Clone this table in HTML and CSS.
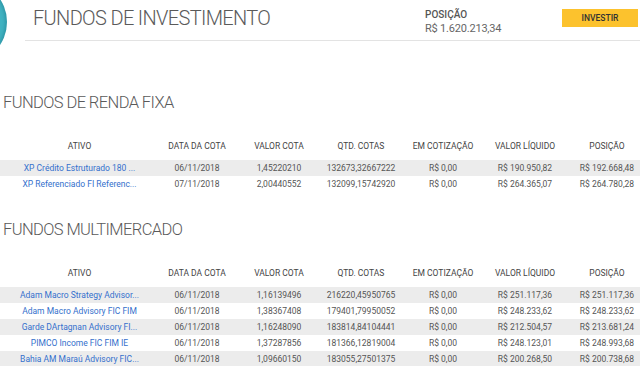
FILE: index.html
```html
<!DOCTYPE html>
<html lang="pt-BR">
<head>
<meta charset="utf-8">
<title>Fundos de Investimento</title>
<link rel="stylesheet" href="styles.css">
</head>
<body>
<div class="page">
  <header class="topbar">
    <div class="logo"></div>
    <h1 class="title">FUNDOS DE INVESTIMENTO</h1>
    <div class="position">
      <div class="position-label">POSIÇÃO</div>
      <div class="position-value">R$ 1.620.213,34</div>
    </div>
    <button class="btn-invest">INVESTIR</button>
  </header>

  <section class="section">
    <h2 class="section-title">FUNDOS DE RENDA FIXA</h2>
    <div class="table">
      <div class="row head">
        <div>ATIVO</div><div>DATA DA COTA</div><div>VALOR COTA</div><div>QTD. COTAS</div><div>EM COTIZAÇÃO</div><div>VALOR LÍQUIDO</div><div>POSIÇÃO</div>
      </div>
      <div class="row odd">
        <div><a class="fund">XP Crédito Estruturado 180 ...</a></div><div>06/11/2018</div><div>1,45220210</div><div>132673,32667222</div><div>R$ 0,00</div><div>R$ 190.950,82</div><div>R$ 192.668,48</div>
      </div>
      <div class="row">
        <div><a class="fund">XP Referenciado FI Referenc...</a></div><div>07/11/2018</div><div>2,00440552</div><div>132099,15742920</div><div>R$ 0,00</div><div>R$ 264.365,07</div><div>R$ 264.780,28</div>
      </div>
    </div>
  </section>

  <section class="section">
    <h2 class="section-title">FUNDOS MULTIMERCADO</h2>
    <div class="table">
      <div class="row head">
        <div>ATIVO</div><div>DATA DA COTA</div><div>VALOR COTA</div><div>QTD. COTAS</div><div>EM COTIZAÇÃO</div><div>VALOR LÍQUIDO</div><div>POSIÇÃO</div>
      </div>
      <div class="row odd">
        <div><a class="fund">Adam Macro Strategy Advisor...</a></div><div>06/11/2018</div><div>1,16139496</div><div>216220,45950765</div><div>R$ 0,00</div><div>R$ 251.117,36</div><div>R$ 251.117,36</div>
      </div>
      <div class="row">
        <div><a class="fund">Adam Macro Advisory FIC FIM</a></div><div>06/11/2018</div><div>1,38367408</div><div>179401,79950052</div><div>R$ 0,00</div><div>R$ 248.233,62</div><div>R$ 248.233,62</div>
      </div>
      <div class="row odd">
        <div><a class="fund">Garde DArtagnan Advisory FI...</a></div><div>06/11/2018</div><div>1,16248090</div><div>183814,84104441</div><div>R$ 0,00</div><div>R$ 212.504,57</div><div>R$ 213.681,24</div>
      </div>
      <div class="row">
        <div><a class="fund">PIMCO Income FIC FIM IE</a></div><div>06/11/2018</div><div>1,37287856</div><div>181366,12819004</div><div>R$ 0,00</div><div>R$ 248.123,01</div><div>R$ 248.993,68</div>
      </div>
      <div class="row odd">
        <div><a class="fund">Bahia AM Maraú Advisory FIC...</a></div><div>06/11/2018</div><div>1,09660150</div><div>183055,27501375</div><div>R$ 0,00</div><div>R$ 200.268,50</div><div>R$ 200.738,68</div>
      </div>
    </div>
  </section>
</div>
</body>
</html>
```
FILE: styles.css
```css
* { box-sizing: border-box; }
html, body {
  margin: 0;
  padding: 0;
  background: #ffffff;
  overflow: hidden;
}
body {
  font-family: Roboto, "Liberation Sans", Arial, sans-serif;
  color: #555555;
}
.page {
  width: 640px;
  height: 366px;
  overflow: hidden;
}
.topbar {
  position: relative;
  display: flex;
  align-items: flex-start;
  margin-left: 25px;
  height: 41px;
  border-bottom: 1px solid #e3e3e3;
  padding-left: 8px;
  padding-right: 2px;
}
.logo {
  position: absolute;
  left: -100px;
  top: -19px;
  width: 82px;
  height: 82px;
  border-radius: 50%;
  background: #3fb2c1;
  box-shadow: inset -2px 0 3px rgba(0, 80, 100, 0.25);
}
.title {
  flex: 1;
  margin: 0;
  padding-top: 8px;
  font-size: 20px;
  line-height: 20px;
  font-weight: 300;
  color: #5a5a5a;
  letter-spacing: -0.65px;
}
.position {
  width: 137px;
  padding-top: 9px;
}
.position-label {
  font-size: 10px;
  line-height: 12px;
  font-weight: 500;
  color: #555555;
}
.position-value {
  font-size: 11px;
  line-height: 14px;
  color: #666666;
  margin-top: 1px;
  letter-spacing: -0.2px;
}
.btn-invest {
  margin-top: 9px;
  width: 76px;
  height: 18px;
  border: none;
  border-radius: 0;
  background: #fcc22d;
  color: #333333;
  font-family: Roboto, "Liberation Sans", Arial, sans-serif;
  font-size: 8.5px;
  font-weight: 500;
  padding: 0;
}
.section-title {
  margin: 52px 0 0 3px;
  font-size: 16.5px;
  line-height: 20px;
  font-weight: 300;
  color: #5a5a5a;
  letter-spacing: -0.6px;
}
.section + .section .section-title {
  margin-top: 28px;
}
.table {
  margin-top: 25px;
  width: 648px;
}
.row {
  display: grid;
  grid-template-columns: 156px repeat(6, 82px);
  height: 16px;
  line-height: 16px;
  font-size: 8.5px;
  color: #555555;
  text-align: center;
  white-space: nowrap;
}
.row > div:first-child {
  padding-left: 3px;
}
.row.head {
  color: #444444;
  margin-bottom: 6px;
}
.row.odd {
  background: #ececec;
}
.fund {
  color: #3470cc;
  text-decoration: none;
}
```
